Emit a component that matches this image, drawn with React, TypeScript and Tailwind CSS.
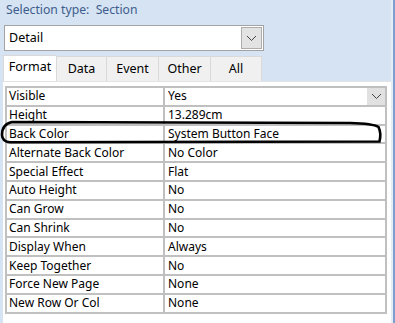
import React from "react";

const rows: [string, string][] = [
  ["Visible", "Yes"],
  ["Height", "13.289cm"],
  ["Back Color", "System Button Face"],
  ["Alternate Back Color", "No Color"],
  ["Special Effect", "Flat"],
  ["Auto Height", "No"],
  ["Can Grow", "No"],
  ["Can Shrink", "No"],
  ["Display When", "Always"],
  ["Keep Together", "No"],
  ["Force New Page", "None"],
  ["New Row Or Col", "None"],
];

const tabs = ["Data", "Event", "Other", "All"];
const tabWidths = ["w-[50px]", "w-[52px]", "w-[52px]", "w-[51px]"];

function Chevron() {
  return (
    <svg width="11" height="7" viewBox="0 0 11 7">
      <path d="M1 1 L5.5 5.5 L10 1" fill="none" stroke="#444" strokeWidth="1" />
    </svg>
  );
}

export default function App() {
  return (
    <div className="relative w-[395px] h-[323px] overflow-hidden bg-[#d5e3f2] text-[12px] leading-none text-black font-['Segoe_UI','Noto_Sans',sans-serif]">
      {/* 标题 */}
      <div className="h-[24px] pl-[6px] pt-[4px] text-[12.2px] text-[#3e5d8c]">
        Selection type:&nbsp; Section
      </div>

      {/* 下拉框 */}
      <div className="ml-[4px] mt-[1px] flex h-[26px] w-[260px] items-center justify-between border border-[#a3a3a3] bg-white pl-[4px] pr-[1px]">
        <span className="text-[12.5px]">Detail</span>
        <div className="flex h-[22px] w-[21px] items-center justify-center border border-[#adadad] bg-[#e3e3e3]">
          <Chevron />
        </div>
      </div>

      {/* 标签页 */}
      <div className="ml-[3px] mt-[4px] flex h-[26px] items-end">
        <div className="flex h-[26px] w-[54px] items-start justify-center border border-b-0 border-[#d9d9d9] bg-white pt-[5px] text-[12.5px]">
          Format
        </div>
        {tabs.map((t, i) => (
          <div
            key={t}
            className={`${tabWidths[i]} flex h-[25px] items-center justify-center border border-l-0 border-b-0 border-[#d9d9d9] bg-[#f0f0f0] pt-[1px] text-[12.5px]`}
          >
            {t}
          </div>
        ))}
      </div>

      {/* 属性表 */}
      <div className="ml-[3px] h-[250px] w-[388px] border-t border-[#e3e3e3] bg-white pl-[2px] pt-[4px]">
        <div className="grid w-[382px] grid-cols-[156px_220px] gap-[2px] bg-[#c0c0c0] p-[2px]">
          {rows.map(([label, value], i) => (
            <React.Fragment key={label}>
              <div className="flex h-[16.8px] items-center bg-white pl-[2px] text-[12px]">{label}</div>
              <div className="flex h-[16.8px] items-center justify-between bg-white pl-[3px] text-[12px]">
                <span>{value}</span>
                {i === 0 && (
                  <div className="flex h-[17px] w-[18px] items-center justify-center bg-[#e1e1e1]">
                    <Chevron />
                  </div>
                )}
              </div>
            </React.Fragment>
          ))}
        </div>
      </div>

      {/* 右侧边框 */}
      <div className="absolute right-0 top-0 h-full w-[4px] border-l-[2px] border-[#e6ecf4] bg-[#7d9fd0]" />

      {/* 手绘标注 */}
      <svg className="absolute left-0 top-[115px]" width="390" height="34" viewBox="0 115 390 34">
        <path
          d="M12 122 L350 123 Q373 123.5 378.5 127 Q381.5 133 379.5 141.5 L10 142.3 Q2.2 141.5 2 135 Q2 124 12 122 Z"
          fill="none"
          stroke="#000"
          strokeWidth="2.6"
        />
      </svg>
    </div>
  );
}
